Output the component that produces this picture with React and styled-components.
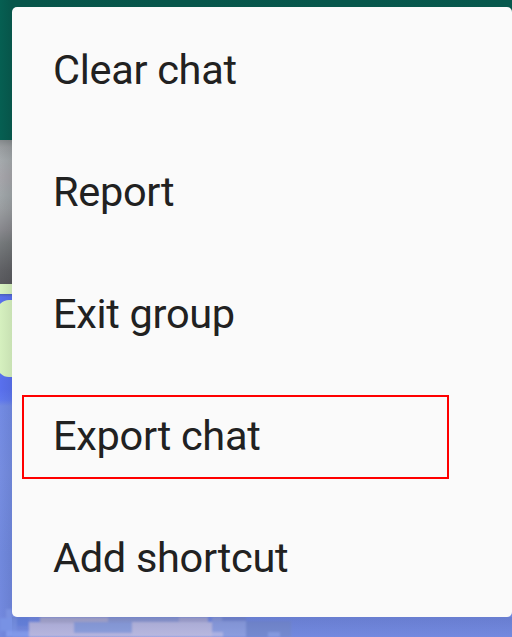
import React from "react";
import styled, { createGlobalStyle } from "styled-components";

const GlobalStyle = createGlobalStyle`
  *, *::before, *::after { box-sizing: border-box; }
  body { margin: 0; overflow: hidden; font-family: Roboto, sans-serif; }
`;

const Screen = styled.main`
  position: relative;
  display: flex;
  flex-direction: column;
  width: 512px;
  height: 637px;
  overflow: hidden;
  background: #7289dc;
`;

const AppBar = styled.header`
  flex: 0 0 140px;
  background: linear-gradient(90deg, #065f52, #07554a 12px, #07584d);
`;

const Photo = styled.div`
  flex: 0 0 144px;
  background:
    linear-gradient(90deg, transparent, rgba(0, 0, 0, 0.08) 12px),
    linear-gradient(#858a8c 0, #999da0 7px, #a5aaad 20px, #a6a5aa 37px, #a0a6a9 55px, #9b9fa2 68px, #88888d 90px, #767a7c 103px, #606165 130px, #59595d 144px);
`;

const PhotoCaption = styled.div`
  flex: 0 0 10px;
  background: linear-gradient(90deg, #d9f4c2, #c8e1b3 12px);
`;

const Wallpaper = styled.div`
  flex: 1;
  display: flex;
  flex-direction: column;
  justify-content: space-between;
  background:
    linear-gradient(90deg, transparent, rgba(30, 45, 100, 0.1) 12px, transparent 13px),
    linear-gradient(#4a5fbe 0, #5267cc 1px, #5970ed 3px, #5970ed 95px, #6079ee 106px, #738be3 112px, #768de0 180px, #7189dd 260px, #7389df 343px);
`;

const Bubble = styled.div`
  width: 48px;
  height: 77px;
  margin: 6px 0 0 -3px;
  border-radius: 12px;
  background: linear-gradient(90deg, #d9f4c2, #c8e1b3 15px);
`;

const Mosaic = styled.svg`
  display: block;
  width: 512px;
  height: 33px;
`;

const Menu = styled.ul`
  position: absolute;
  top: 7px;
  left: 12px;
  width: 500px;
  margin: 0;
  padding: 0;
  list-style: none;
  border-radius: 5px;
  background: #fafafa;
`;

const MenuItem = styled.li`
  position: relative;
  display: flex;
  align-items: center;
  height: 122px;
  padding: 3px 41px 0;
  color: #212121;
  font-size: 41.5px;
  line-height: 49px;
  letter-spacing: -0.31px;
  white-space: nowrap;
`;

const Highlight = styled.span`
  position: absolute;
  top: 22px;
  left: 10px;
  width: 427px;
  height: 84px;
  border: 2px solid #ff0000;
`;

const tiles = [
  [6, 5, 6, 9, "#7a91e0"],
  [0, 14, 17, 13, "#7892e4"],
  [6, 27, 24, 6, "#829aeb"],
  [17, 13, 12, 9, "#6884df"],
  [29, 18, 183, 15, "#b8b7df"],
  [40, 13, 68, 6, "#aaa9cd"],
  [108, 13, 71, 6, "#8c98cf"],
  [179, 13, 29, 6, "#a5a5cf"],
  [74, 18, 58, 11, "#8c9fdc"],
  [132, 18, 80, 15, "#b9b9e0"],
  [212, 13, 10, 4, "#8a99d6"],
  [212, 17, 34, 16, "#8c9edf"],
  [222, 13, 24, 4, "#7487cd"],
  [212, 28, 11, 5, "#aeb3e4"],
  [246, 17, 45, 16, "#748ad0"],
  [268, 28, 12, 5, "#859be0"],
];

const items = ["Clear chat", "Report", "Exit group", "Export chat", "Add shortcut"];

export default function App() {
  return (
    <>
      <GlobalStyle />
      <Screen>
        <AppBar />
        <Photo />
        <PhotoCaption />
        <Wallpaper>
          <Bubble />
          <Mosaic viewBox="0 0 512 33" aria-hidden="true">
            <defs>
              <linearGradient id="shade" x1="0" y1="0" x2="0" y2="1">
                <stop offset="0" stopColor="#283878" stopOpacity="0.14" />
                <stop offset="1" stopColor="#283878" stopOpacity="0" />
              </linearGradient>
              <filter id="soften"><feGaussianBlur stdDeviation="1" /></filter>
            </defs>
            <g filter="url(#soften)">
              {tiles.map(([x, y, w, h, color], i) => (
                <rect key={i} x={x} y={y} width={w} height={h} fill={color} />
              ))}
            </g>
            <rect x="12" y="13" width="500" height="20" fill="url(#shade)" />
          </Mosaic>
        </Wallpaper>
        <Menu role="menu">
          {items.map((label) => (
            <MenuItem role="menuitem" key={label}>
              {label}
              {label === "Export chat" && <Highlight />}
            </MenuItem>
          ))}
        </Menu>
      </Screen>
    </>
  );
}
